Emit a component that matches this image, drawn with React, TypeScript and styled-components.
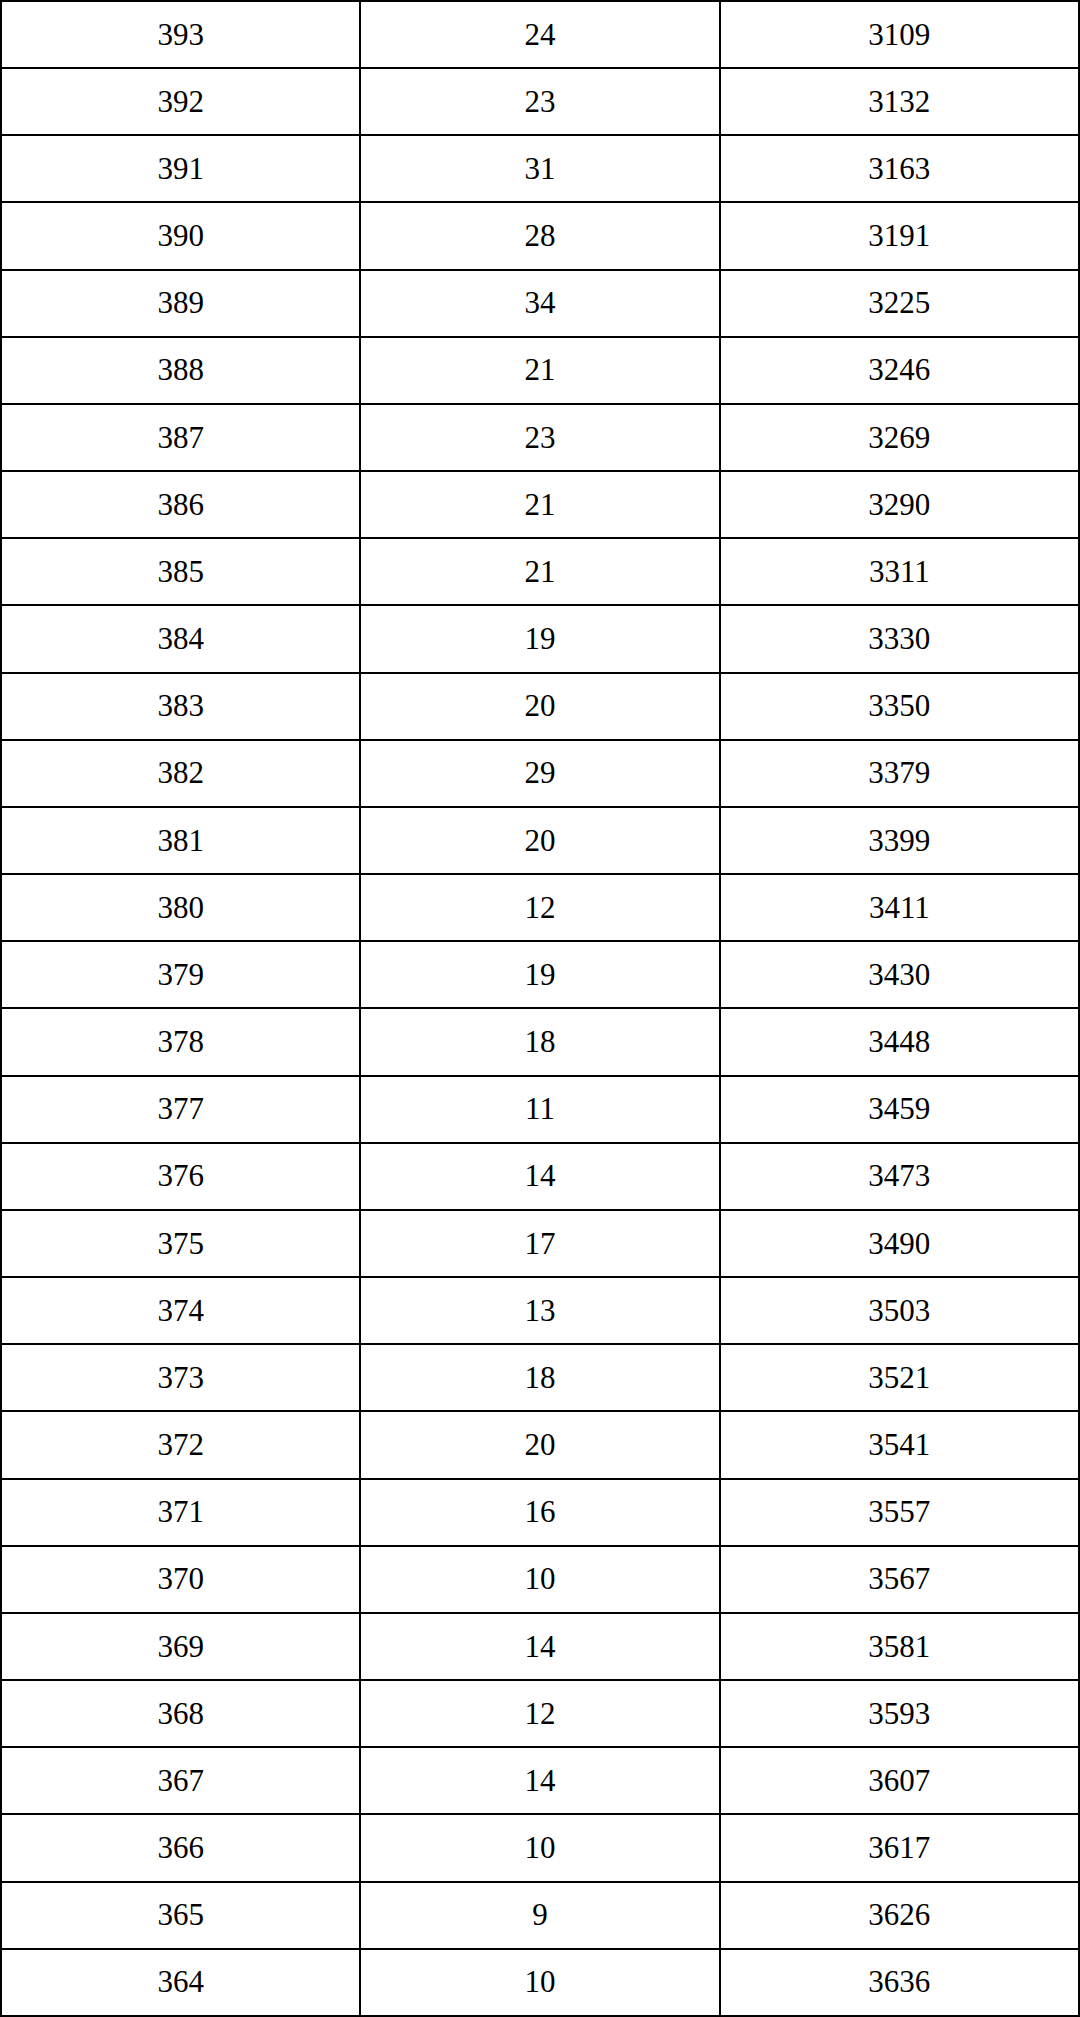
import React from "react";
import styled, { createGlobalStyle } from "styled-components";

const GlobalStyle = createGlobalStyle`
    html, body {
        margin: 0;
        padding: 0;
        background: #fff;
    }
`;

const Table = styled.div`
    width: 1080px;
    height: 2017px;
    box-sizing: border-box;
    display: grid;
    grid-template-columns: repeat(3, 1fr);
    grid-template-rows: repeat(30, 1fr);
    gap: 2px;
    padding: 2px;
    background: #000;
`;

const Cell = styled.div`
    background: #fff;
    display: flex;
    align-items: center;
    justify-content: center;
    font-family: "Liberation Serif", "Noto Sans CJK SC", serif;
    font-size: 31px;
    color: #000;
`;

// score, count, cumulative
const rows: [number, number, number][] = [
    [393, 24, 3109],
    [392, 23, 3132],
    [391, 31, 3163],
    [390, 28, 3191],
    [389, 34, 3225],
    [388, 21, 3246],
    [387, 23, 3269],
    [386, 21, 3290],
    [385, 21, 3311],
    [384, 19, 3330],
    [383, 20, 3350],
    [382, 29, 3379],
    [381, 20, 3399],
    [380, 12, 3411],
    [379, 19, 3430],
    [378, 18, 3448],
    [377, 11, 3459],
    [376, 14, 3473],
    [375, 17, 3490],
    [374, 13, 3503],
    [373, 18, 3521],
    [372, 20, 3541],
    [371, 16, 3557],
    [370, 10, 3567],
    [369, 14, 3581],
    [368, 12, 3593],
    [367, 14, 3607],
    [366, 10, 3617],
    [365, 9, 3626],
    [364, 10, 3636],
];

const App = () => (
    <>
        <GlobalStyle />
        <Table>
            {rows.map(([score, count, total]) => (
                <React.Fragment key={score}>
                    <Cell>{score}</Cell>
                    <Cell>{count}</Cell>
                    <Cell>{total}</Cell>
                </React.Fragment>
            ))}
        </Table>
    </>
);

export default App;
